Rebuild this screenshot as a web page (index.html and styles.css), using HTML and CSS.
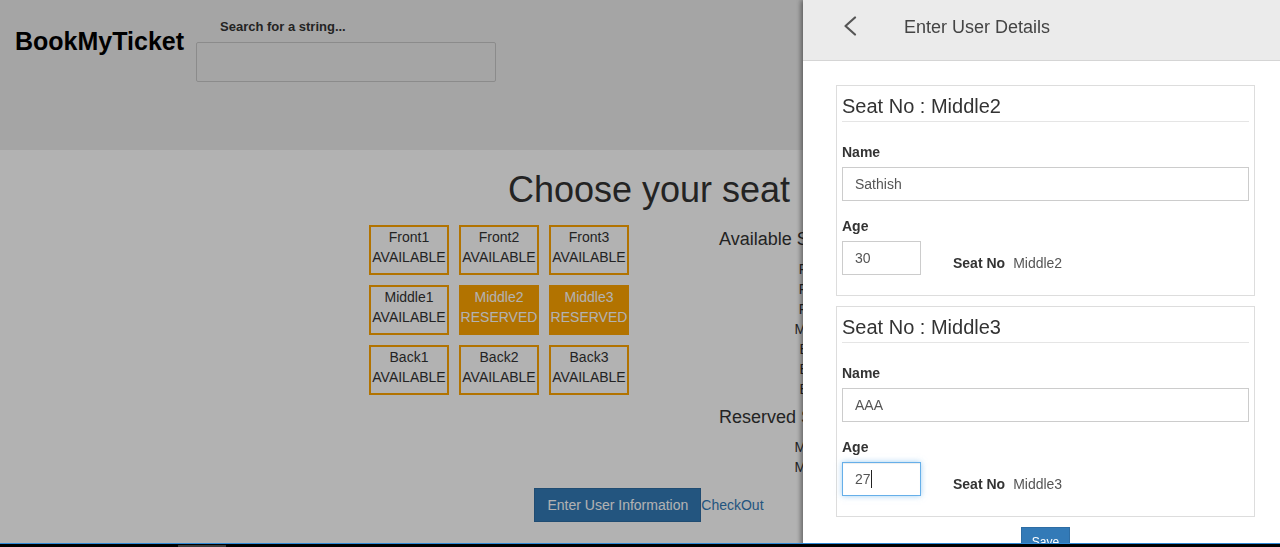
FILE: index.html
```html
<!DOCTYPE html>
<html>
<head>
<meta charset="utf-8">
<title>BookMyTicket</title>
<link rel="stylesheet" href="styles.css">
</head>
<body>
<div class="page">
  <header class="topbar">
    <div class="logo">BookMyTicket</div>
    <div class="search">
      <label class="search-label">Search for a string...</label>
      <input class="search-input" type="text">
    </div>
  </header>
  <main class="main">
    <h1 class="title">Choose your seat</h1>
    <div class="content">
      <div class="seats">
        <div class="seat"><span>Front1</span><span>AVAILABLE</span></div>
        <div class="seat"><span>Front2</span><span>AVAILABLE</span></div>
        <div class="seat"><span>Front3</span><span>AVAILABLE</span></div>
        <div class="seat"><span>Middle1</span><span>AVAILABLE</span></div>
        <div class="seat reserved"><span>Middle2</span><span>RESERVED</span></div>
        <div class="seat reserved"><span>Middle3</span><span>RESERVED</span></div>
        <div class="seat"><span>Back1</span><span>AVAILABLE</span></div>
        <div class="seat"><span>Back2</span><span>AVAILABLE</span></div>
        <div class="seat"><span>Back3</span><span>AVAILABLE</span></div>
      </div>
      <div class="summary">
        <h4 class="sum-title">Available Seats</h4>
        <ul class="sum-list">
          <li>Front1</li><li>Front2</li><li>Front3</li><li>Middle1</li><li>Back1</li><li>Back2</li><li>Back3</li>
        </ul>
        <h4 class="sum-title sum-title2">Reserved Seats</h4>
        <ul class="sum-list">
          <li>Middle2</li><li>Middle3</li>
        </ul>
      </div>
    </div>
    <div class="actions">
      <button class="btn-primary">Enter User Information</button><a class="link" href="#">CheckOut</a>
    </div>
  </main>
</div>
<div class="overlay"></div>
<aside class="panel">
  <div class="panel-head">
    <svg class="back" width="14" height="20" viewBox="0 0 14 20"><path d="M12 1.5 L2.5 10 L12 18.5" fill="none" stroke="#555" stroke-width="2.2" stroke-linecap="round" stroke-linejoin="round"/></svg>
    <span class="panel-title">Enter User Details</span>
  </div>
  <div class="panel-body">
    <div class="card">
      <h3 class="card-title">Seat No : Middle2</h3>
      <label class="flabel">Name</label>
      <input class="finput" type="text" value="Sathish">
      <label class="flabel flabel2">Age</label>
      <div class="age-row">
        <div class="age-wrap"><input class="finput age" type="text" value="30"></div>
        <span class="seat-lbl">Seat No</span><span class="seat-val">Middle2</span>
      </div>
    </div>
    <div class="card">
      <h3 class="card-title">Seat No : Middle3</h3>
      <label class="flabel">Name</label>
      <input class="finput" type="text" value="AAA">
      <label class="flabel flabel2">Age</label>
      <div class="age-row">
        <div class="age-wrap"><input class="finput age focused" type="text" value="27"><span class="caret"></span></div>
        <span class="seat-lbl">Seat No</span><span class="seat-val">Middle3</span>
      </div>
    </div>
    <div class="save-row"><button class="btn-save">Save</button></div>
  </div>
</aside>
<div class="taskbar"><span class="task-seg"></span></div>
</body>
</html>
```
FILE: styles.css
```css
* { box-sizing: border-box; }
html, body { margin: 0; padding: 0; height: 100%; overflow: hidden; }
body {
  font-family: "Liberation Sans", Arial, sans-serif;
  font-size: 14px;
  line-height: 20px;
  color: #333;
  background: #fff;
}
.page { width: 1280px; }
.topbar {
  height: 150px;
  background: #ededed;
  display: flex;
  align-items: flex-start;
  padding-left: 15px;
}
.logo {
  margin-top: 26px;
  font-size: 25px;
  line-height: 30px;
  font-weight: bold;
  color: #000;
}
.search {
  margin-left: 12px;
  margin-top: 18px;
  display: flex;
  flex-direction: column;
}
.search-label {
  font-size: 13px;
  line-height: 18px;
  font-weight: bold;
  padding-left: 24px;
  margin-bottom: 6px;
}
.search-input {
  width: 300px;
  height: 40px;
  border: 1px solid #c8c8c8;
  border-radius: 2px;
  background: #ededed;
  margin: 0;
}
.main { margin-left: 18px; }
.title {
  margin: 20px 0 0;
  font-size: 36px;
  line-height: 40px;
  font-weight: normal;
  text-align: center;
  color: #333;
}
.content {
  margin-top: 15px;
  display: flex;
  justify-content: center;
  gap: 90px;
}
.seats {
  display: grid;
  grid-template-columns: repeat(3, 80px);
  grid-auto-rows: 50px;
  gap: 10px;
  width: 260px;
  align-self: flex-start;
}
.seat {
  border: 2px solid #ffa500;
  display: flex;
  flex-direction: column;
  align-items: center;
  white-space: nowrap;
  color: #333;
}
.seat.reserved { background: #ffa500; color: #fff; }
.summary { width: 210px; }
.sum-title {
  margin: 4px 0 10px;
  font-size: 18px;
  line-height: 20px;
  font-weight: normal;
}
.sum-title2 { margin-top: 8px; }
.sum-list {
  list-style: none;
  margin: 0;
  padding: 0;
  width: 200px;
  text-align: center;
}
.actions {
  margin-top: 11px;
  text-align: center;
}
.btn-primary {
  font-family: inherit;
  font-size: 14px;
  line-height: 20px;
  padding: 6px 12px;
  background: #337ab7;
  border: 1px solid #2e6da4;
  color: #fff;
  border-radius: 0;
  margin: 0;
  vertical-align: middle;
}
.link {
  color: #337ab7;
  text-decoration: none;
  vertical-align: middle;
}
.overlay {
  position: fixed;
  inset: 0;
  background: rgba(0, 0, 0, 0.3);
}
.panel {
  position: fixed;
  top: 0;
  right: 0;
  width: 477px;
  height: 100%;
  background: #fff;
  box-shadow: -2px 0 5px rgba(0, 0, 0, 0.45);
}
.panel-head {
  height: 61px;
  background: #ebebeb;
  border-bottom: 1px solid #d5d5d5;
  display: flex;
  align-items: flex-start;
  padding: 16px 0 0 40px;
}
.panel-title {
  margin-left: 47px;
  margin-top: 1px;
  font-size: 18px;
  line-height: 20px;
  color: #444;
}
.panel-body { padding: 24px 25px 0 33px; }
.card {
  border: 1px solid #ddd;
  padding: 5px 5px 5px;
  margin-bottom: 10px;
  display: flex;
  flex-direction: column;
  align-items: flex-start;
}
.card-title {
  margin: 0;
  width: 100%;
  font-size: 20px;
  line-height: 28px;
  font-weight: normal;
  color: #333;
  padding-top: 1px;
  padding-bottom: 1px;
  border-bottom: 1px solid #e5e5e5;
}
.flabel {
  margin-top: 20px;
  margin-bottom: 5px;
  font-weight: bold;
  color: #333;
}
.flabel2 { margin-top: 15px; }
.finput {
  width: 100%;
  height: 34px;
  margin: 0;
  padding: 6px 12px;
  border: 1px solid #ccc;
  border-radius: 0;
  font-family: inherit;
  font-size: 14px;
  color: #555;
  background: #fff;
  outline: none;
  caret-color: transparent;
}
.age-row {
  display: flex;
  align-items: flex-end;
  margin-bottom: 15px;
}
.age-wrap { position: relative; width: 79px; }
.finput.age { width: 79px; }
.finput.focused {
  border-color: #66afe9;
  box-shadow: inset 0 1px 1px rgba(0,0,0,.075), 0 0 6px rgba(102,175,233,.6);
}
.caret {
  position: absolute;
  left: 29px;
  top: 8px;
  width: 1px;
  height: 18px;
  background: #222;
}
.seat-lbl {
  margin-left: 32px;
  margin-bottom: 2px;
  font-weight: bold;
  color: #333;
}
.seat-val {
  margin-left: 8px;
  margin-bottom: 2px;
  color: #555;
}
.save-row { display: flex; justify-content: center; }
.btn-save {
  font-family: inherit;
  font-size: 12px;
  line-height: 18px;
  padding: 5px 10px;
  background: #337ab7;
  border: 1px solid #2e6da4;
  color: #fff;
  border-radius: 0;
  margin: 0;
}
.taskbar {
  position: fixed;
  left: 0;
  right: 0;
  bottom: 0;
  height: 4px;
  background: #000;
  border-top: 1px solid #2f8ad8;
}
.task-seg {
  position: absolute;
  left: 178px;
  bottom: 0;
  width: 48px;
  height: 2px;
  background: #3a3a3a;
}
```
